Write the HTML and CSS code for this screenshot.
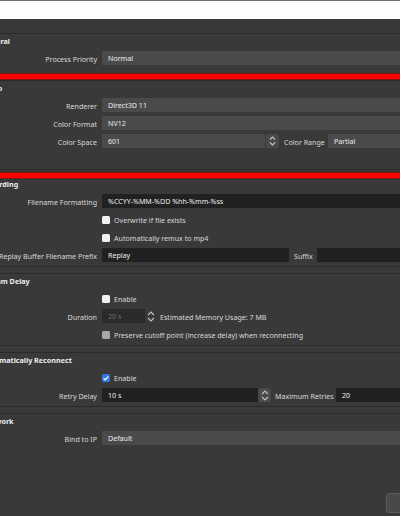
FILE: index.html
```html
<!DOCTYPE html>
<html lang="en">
<head>
    <meta charset="UTF-8">
    <meta name="viewport" content="width=device-width, initial-scale=1.0">
    <title>Settings - Advanced</title>
    <link rel="stylesheet" href="styles.css">
</head>
<body>
    <div class="topbar"></div>

    <div class="settings">
        <!-- General -->
        <section class="group group-general">
            <h3>General</h3>
            <div class="row">
                <span class="label">Process Priority</span>
                <div class="fields"><div class="combo">Normal</div></div>
            </div>
        </section>

        <!-- Video -->
        <section class="group group-video">
            <h3>Video</h3>
            <div class="row">
                <span class="label">Renderer</span>
                <div class="fields"><div class="combo">Direct3D 11</div></div>
            </div>
            <div class="row">
                <span class="label">Color Format</span>
                <div class="fields"><div class="combo">NV12</div></div>
            </div>
            <div class="row">
                <span class="label">Color Space</span>
                <div class="fields">
                    <div class="combo color-space">601</div>
                    <div class="spin boxed">
                        <svg width="7" height="12" viewBox="0 0 7 12"><polyline points="1,4.5 3.5,2 6,4.5"/><polyline points="1,7.5 3.5,10 6,7.5"/></svg>
                    </div>
                    <span class="pair-label color-range">Color Range</span>
                    <div class="combo">Partial</div>
                </div>
            </div>
        </section>

        <!-- Recording -->
        <section class="group">
            <h3>Recording</h3>
            <div class="row">
                <span class="label">Filename Formatting</span>
                <div class="fields"><div class="input">%CCYY-%MM-%DD %hh-%mm-%ss</div></div>
            </div>
            <div class="row">
                <span class="label"></span>
                <label class="check"><span class="box"></span>Overwrite if file exists</label>
            </div>
            <div class="row">
                <span class="label"></span>
                <label class="check"><span class="box"></span>Automatically remux to mp4</label>
            </div>
            <div class="row">
                <span class="label">Replay Buffer Filename Prefix</span>
                <div class="fields">
                    <div class="input replay-prefix">Replay</div>
                    <span class="pair-label suffix">Suffix</span>
                    <div class="input"></div>
                </div>
            </div>
        </section>

        <!-- Stream Delay -->
        <section class="group">
            <h3>Stream Delay</h3>
            <div class="row">
                <span class="label"></span>
                <label class="check"><span class="box"></span>Enable</label>
            </div>
            <div class="row">
                <span class="label">Duration</span>
                <div class="fields">
                    <div class="input disabled duration">20 s</div>
                    <div class="spin">
                        <svg width="8" height="13" viewBox="0 0 8 13"><polyline points="1,5 4,2 7,5"/><polyline points="1,8 4,11 7,8"/></svg>
                    </div>
                    <span class="pair-label memory">Estimated Memory Usage: 7 MB</span>
                </div>
            </div>
            <div class="row">
                <span class="label"></span>
                <label class="check"><span class="box disabled"></span>Preserve cutoff point (increase delay) when reconnecting</label>
            </div>
        </section>

        <!-- Automatically Reconnect -->
        <section class="group">
            <h3>Automatically Reconnect</h3>
            <div class="row">
                <span class="label"></span>
                <label class="check">
                    <span class="box checked">
                        <svg width="8" height="8" viewBox="0 0 8 8"><polyline points="1.6,4.2 3.3,5.8 6.4,2.3"/></svg>
                    </span>Enable
                </label>
            </div>
            <div class="row">
                <span class="label">Retry Delay</span>
                <div class="fields">
                    <div class="input retry-delay">10 s</div>
                    <div class="spin boxed">
                        <svg width="8" height="13" viewBox="0 0 8 13"><polyline points="1,5 4,2 7,5"/><polyline points="1,8 4,11 7,8"/></svg>
                    </div>
                    <span class="pair-label retries">Maximum Retries</span>
                    <div class="input">20</div>
                </div>
            </div>
        </section>

        <!-- Network -->
        <section class="group group-network">
            <h3>Network</h3>
            <div class="row">
                <span class="label">Bind to IP</span>
                <div class="fields"><div class="combo">Default</div></div>
            </div>
        </section>

        <div class="footer"><button type="button"></button></div>
    </div>

    <div class="mark mark-general"></div>
    <div class="mark mark-video"></div>
</body>
</html>
```

FILE: styles.css
```css
body {
    margin: 0;
    width: 400px;
    height: 516px;
    overflow: hidden;
    background: #3a393a;
    font-family: "Noto Sans", "Liberation Sans", sans-serif;
    font-size: 7.1px;
    color: #d8d8d8;
}
.topbar {
    height: 18px;
    background: #fdfdfd;
    border-top: 1px solid #6f6f6f;
}
.settings {
    padding-top: 14px;
}
.group {
    margin: 0 -60px 6px -26px;
    border: 1px solid #2b2a2b;
    padding-bottom: 2px;
}
.group h3 {
    margin: 0;
    height: 15px;
    line-height: 14px;
    padding-left: 7px;
    font-size: 7.2px;
    font-weight: bold;
    color: #ededed;
}
.group-general {
    padding-bottom: 6px;
}
.group-video {
    padding-bottom: 19px;
}
.group-network {
    border-bottom: 0;
    padding-bottom: 0;
    margin-bottom: 0;
}
.row {
    display: grid;
    grid-template-columns: 127px 1fr;
    height: 18px;
    align-items: center;
}
.label {
    text-align: right;
    padding-right: 5px;
    padding-top: 1px;
    white-space: nowrap;
}
.fields {
    display: flex;
    align-items: center;
}
.combo, .input {
    flex: 1;
    box-sizing: border-box;
    height: 14px;
    line-height: 15px;
    padding-left: 6px;
    color: #ececec;
    white-space: nowrap;
}
.combo {
    background: #4b4a4b;
}
.input {
    background: #222122;
}
.input.disabled {
    background: #2b2a2b;
    color: #6e6e6e;
}
.spin {
    width: 12px;
    height: 14px;
    display: flex;
    align-items: center;
    justify-content: center;
}
.spin.boxed {
    width: 13px;
    background: #4b4a4b;
    border-radius: 2px;
}
.spin svg polyline {
    fill: none;
    stroke: #c4c4c4;
    stroke-width: 1.1;
}
.pair-label {
    box-sizing: border-box;
    padding-top: 1px;
    white-space: nowrap;
}
.color-space {
    flex: none;
    width: 163px;
    margin-right: 1px;
}
.color-range {
    width: 49px;
    padding-left: 5px;
}
.replay-prefix {
    flex: none;
    width: 187px;
}
.suffix {
    width: 28px;
    padding-left: 5px;
}
.duration {
    flex: none;
    width: 43px;
}
.memory {
    padding-left: 3px;
}
.retry-delay {
    flex: none;
    width: 156px;
}
.retries {
    width: 65px;
    padding-left: 4px;
}
.check {
    display: flex;
    align-items: center;
    gap: 4px;
    padding-top: 1px;
    white-space: nowrap;
}
.box {
    width: 8px;
    height: 8px;
    border-radius: 1.5px;
    background: #f1f1f1;
    display: flex;
}
.box.disabled {
    background: #a8a8a8;
}
.box.checked {
    background: #2f7ad8;
}
.box.checked polyline {
    fill: none;
    stroke: #ffffff;
    stroke-width: 1.2;
}
.footer {
    display: flex;
    justify-content: flex-end;
    margin-top: 46px;
}
.footer button {
    width: 30px;
    height: 20px;
    margin-right: -16px;
    padding: 0;
    background: #4a494a;
    border: 1px solid #5c5b5c;
    border-radius: 3px;
}
.mark {
    position: absolute;
    left: 0;
    width: 400px;
    height: 5px;
    background: #ff0000;
    border-top: 1px solid #7c1616;
    border-bottom: 1px solid #7c1616;
}
.mark-general {
    top: 73px;
}
.mark-video {
    top: 172px;
}
```
